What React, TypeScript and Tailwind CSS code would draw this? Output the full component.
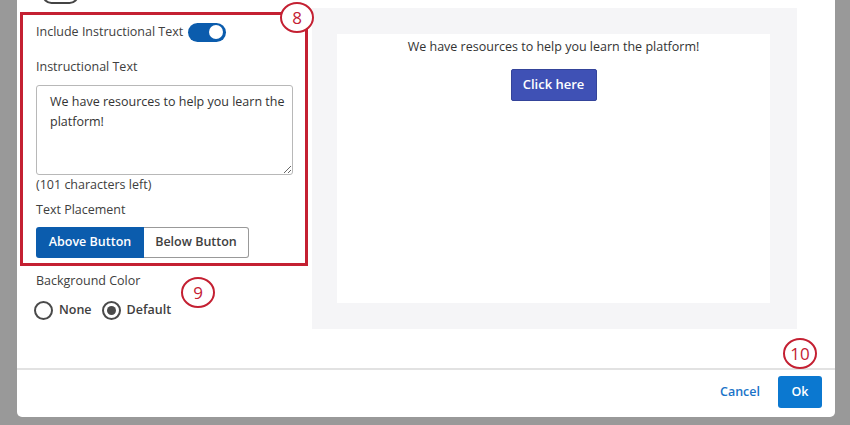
import React from 'react';

const Marker = ({ n, className }: { n: string; className: string }) => (
    <div
        className={`absolute w-[34px] h-[31px] rounded-[50%] border-[2.5px] border-[#c42032] bg-white flex items-center justify-center text-[#c42032] text-[17px] leading-none ${className}`}
    >
        {n}
    </div>
);

const Radio = ({ label, checked }: { label: string; checked?: boolean }) => (
    <label className="flex items-center gap-[6px]">
        <span className="w-[19px] h-[19px] rounded-full border-2 border-[#4a4a4a] flex items-center justify-center">
            {checked && <span className="w-[9px] h-[9px] rounded-full bg-[#4a4a4a]" />}
        </span>
        <span className="font-semibold text-[#404040]">{label}</span>
    </label>
);

export default function App() {
    return (
        <div
            className="w-[850px] h-[425px] bg-[#999999] flex pl-[17px] pr-[15px] pb-[8px] overflow-hidden text-[12.5px] text-[#404040]"
            style={{ fontFamily: '"Open Sans", "Noto Sans", sans-serif' }}
        >
            <div className="flex-1 bg-white rounded-b-[5px] flex flex-col relative">
                {/* Body */}
                <div className="h-[368px] flex items-start">
                    {/* Settings column */}
                    <div className="w-[295px] flex flex-col relative">
                        <div className="-mt-[15px] ml-[25px] w-[37px] h-[19px] rounded-full border-2 border-[#444] flex items-center pl-[2px]">
                            <span className="w-[11px] h-[11px] rounded-full bg-[#444]" />
                        </div>

                        <div className="mt-[8px] ml-[3px] w-[288px] h-[254px] border-[3px] border-[#c42032] relative px-[13px] flex flex-col">
                            <div className="mt-[7px] h-[20px] flex items-center gap-[5px]">
                                <span>Include Instructional Text</span>
                                <span className="w-[38px] h-[19px] rounded-full bg-[#0b5cad] flex items-center justify-end pr-[3px]">
                                    <span className="w-[14px] h-[14px] rounded-full bg-white" />
                                </span>
                            </div>

                            <div className="mt-[15px] leading-[20px]">Instructional Text</div>

                            <textarea
                                className="mt-[8px] w-[257px] h-[90px] border border-[#b8b8b8] rounded-[3px] pl-[13px] pr-[6px] pt-[6px] leading-[20px] text-[#333] outline-none"
                                defaultValue="We have resources to help you learn the platform!"
                            />

                            <div className="leading-[20px]">(101 characters left)</div>

                            <div className="mt-[5px] leading-[20px]">Text Placement</div>

                            <div className="mt-[7px] flex h-[31px] w-[213px]">
                                <button className="w-[108px] bg-[#0b5cad] text-white font-semibold rounded-l-[3px]">
                                    Above Button
                                </button>
                                <button className="w-[105px] border border-[#999] border-l-0 text-[#404040] font-semibold rounded-r-[3px]">
                                    Below Button
                                </button>
                            </div>

                            <Marker n="8" className="left-[257px] -top-[13px]" />
                        </div>

                        <div className="mt-[5px] ml-[19px] leading-[20px]">Background Color</div>
                        <div className="mt-[9px] ml-[17px] h-[20px] flex items-center gap-[10px]">
                            <Radio label="None" />
                            <Radio label="Default" checked />
                        </div>

                        <Marker n="9" className="left-[164px] top-[277px]" />
                    </div>

                    {/* Preview */}
                    <div className="mt-[8px] w-[485px] h-[321px] bg-[#f5f5f7] pt-[26px] pl-[25px]">
                        <div className="w-[433px] h-[269px] bg-white flex flex-col items-center pt-[3px]">
                            <div className="leading-[20px] text-[#333]">We have resources to help you learn the platform!</div>
                            <button className="mt-[12px] w-[86px] h-[32px] bg-[#3f51b5] border border-[#34449a] rounded-[2px] text-white font-semibold text-[13px]">
                                Click here
                            </button>
                        </div>
                    </div>
                </div>

                {/* Footer */}
                <div className="flex-1 border-t-2 border-[#e2e2e2] flex justify-end items-start pt-[6px] pr-[13px] gap-[18px]">
                    <button className="h-[32px] text-[#1a73c8] font-semibold text-[12.5px]">Cancel</button>
                    <button className="w-[44px] h-[32px] bg-[#0b78d0] rounded-[3px] text-white font-semibold text-[12.5px]">
                        Ok
                    </button>
                </div>

                <Marker n="10" className="left-[766px] top-[338px]" />
            </div>
        </div>
    );
}
